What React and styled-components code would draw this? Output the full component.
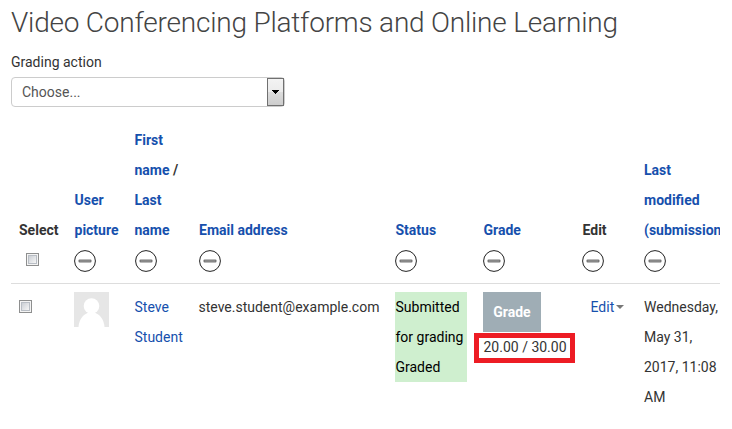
import React from 'react';
import styled, { createGlobalStyle } from 'styled-components';

const GlobalStyle = createGlobalStyle`
  * { box-sizing: border-box; }
  body {
    margin: 0;
    background: #fff;
    color: #333;
    font: 400 14px/30px Roboto, "Liberation Sans", sans-serif;
  }
`;

const Page = styled.main`
  width: 732px;
  height: 429px;
  padding: 0 12px 0 11px;
  overflow: hidden;
`;

const Title = styled.h1`
  margin: 0;
  padding-top: 3px;
  height: 47px;
  font-size: 28px;
  line-height: 40px;
  font-weight: 300;
  color: #444;
  white-space: nowrap;
  letter-spacing: -0.21px;
`;

const Label = styled.label`
  display: block;
  height: 30px;
`;

const Select = styled.div`
  display: flex;
  width: 274px;
  height: 30px;
  border: 1px solid #ccc;
  border-radius: 4px;
  line-height: 28px;
  color: #555;
`;

const SelectValue = styled.span`
  flex: 1;
  padding-left: 10px;
`;

const SelectButton = styled.span`
  display: flex;
  align-items: center;
  justify-content: center;
  width: 17px;
  height: 28px;
  border: 1px solid #707070;
  background: linear-gradient(#f3f3f3 0%, #ebebeb 50%, #dddddd 51%, #cdcdcd 100%);
`;

const Row = styled.div`
  display: grid;
  grid-template-columns: 55px 60.5px 64px 196.5px 88px 99px 62px 84px;
  width: 709px;
`;

const HeaderRow = styled(Row)`
  margin-top: 10px;
  height: 166px;
  align-items: end;
  font-weight: 700;
`;

const BodyRow = styled(Row)`
  border-top: 1px solid #ddd;
`;

const Cell = styled.div`
  min-width: 0;
  padding: 8px 0 8px 8px;
  white-space: nowrap;
`;

const ClippedCell = styled(Cell)`
  overflow: hidden;
`;

const EditCell = styled(Cell)`
  padding-left: 16.5px;
`;

const Link = styled.a`
  color: #1650ad;
`;

const TextLine = styled.div`
  padding-left: ${(p) => (p.$flush ? '0' : '0.5px')};
`;

const IconLine = styled.div`
  display: flex;
  align-items: center;
  height: 30px;
  padding-top: 2px;
`;

const CheckLine = styled(IconLine)`
  padding: 0 0 1px ${(p) => (p.$indent ? '7px' : '0')};
`;

const Check = styled.span`
  width: 13px;
  height: 13px;
  padding: 2px;
  border: 1px solid #8e8f8f;
  background: linear-gradient(135deg, #cbcfd5, #f6f6f6) content-box, #f4f4f4;
  box-shadow: inset 0 0 0 1px #f4f4f4, inset 0 0 0 2px #b9bec5;
`;

const Status = styled.div`
  width: 72px;
  padding-left: 0.5px;
  background: #cfefcf;
  color: #000;
`;

const GradeButton = styled.div`
  width: 58px;
  height: 40px;
  background: #9fadb5;
  color: #fff;
  font-weight: 700;
  line-height: 40px;
  text-align: center;
`;

const GradeValue = styled.div`
  position: relative;
  padding-left: 0.5px;
`;

const Highlight = styled.span`
  position: absolute;
  left: -9px;
  top: 1px;
  width: 101px;
  height: 30px;
  border: 5px solid #ed1c24;
`;

const Caret = styled.span`
  display: inline-block;
  margin-left: 2px;
  vertical-align: 3px;
  border: 4px solid transparent;
  border-top-color: #777;
  border-bottom: 0;
`;

const Picture = styled.svg`
  display: block;
`;

function HideIcon() {
  return (
    <svg width="22" height="22" viewBox="0 0 22 22" fill="none">
      <circle cx="11" cy="11" r="10.4" stroke="#222" strokeWidth="1" />
      <rect x="4.5" y="9.6" width="13" height="2.8" rx="1" fill="#777" />
      <path d="M6 11h10" stroke="#999" />
    </svg>
  );
}

const columns = [
  { lines: ['User', 'picture'] },
  { lines: ['First', 'name /', 'Last', 'name'], flush: true },
  { lines: ['Email address'] },
  { lines: ['Status'] },
  { lines: ['Grade'] },
  { lines: ['Edit'], plain: true },
  { lines: ['Last', 'modified', '(submission'], clipped: true, flush: true },
];

function HeaderLine({ text, plain, flush }) {
  if (plain) return <TextLine $flush={flush}>{text}</TextLine>;
  const [name, slash] = text.split(' /');
  return (
    <TextLine $flush={flush}>
      <Link>{name}</Link>{slash !== undefined && ' /'}
    </TextLine>
  );
}

export default function App() {
  return (
    <>
      <GlobalStyle />
      <Page>
        <Title>Video Conferencing Platforms and Online Learning</Title>
        <Label>Grading action</Label>
        <Select>
          <SelectValue>Choose...</SelectValue>
          <SelectButton>
            <svg width="7" height="4" viewBox="0 0 7 4" shapeRendering="crispEdges">
              <path d="M0 0h7v1H0zM1 1h5v1H1zM2 2h3v1H2zM3 3h1v1H3z" />
            </svg>
          </SelectButton>
        </Select>
        <HeaderRow>
          <Cell>
            <div>Select</div>
            <CheckLine $indent><Check /></CheckLine>
          </Cell>
          {columns.map((c) => {
            const Box = c.clipped ? ClippedCell : Cell;
            return (
              <Box key={c.lines.join(' ')}>
                {c.lines.map((l) => (
                  <HeaderLine key={l} text={l} plain={c.plain} flush={c.flush} />
                ))}
                <IconLine><HideIcon /></IconLine>
              </Box>
            );
          })}
        </HeaderRow>
        <BodyRow>
          <Cell><CheckLine><Check /></CheckLine></Cell>
          <Cell>
            <Picture width="35" height="35" viewBox="0 0 35 35">
              <path fill="#e6e6e6" d="M0 0h35v35H0z" />
              <circle cx="17.5" cy="14" r="7.8" fill="#fff" />
              <path fill="#fff" d="M4.500 35C5 28 8.500 23 13.500 21h8C26.500 23 30 28 30.500 35z" />
            </Picture>
          </Cell>
          <Cell><Link>Steve<br />Student</Link></Cell>
          <Cell>steve.student@example.com</Cell>
          <Cell><Status>Submitted<br />for grading<br />Graded</Status></Cell>
          <Cell>
            <GradeButton>Grade</GradeButton>
            <GradeValue>20.00 / 30.00<Highlight /></GradeValue>
          </Cell>
          <EditCell><Link>Edit</Link><Caret /></EditCell>
          <Cell>Wednesday,<br />May 31,<br />2017, 11:08<br />AM</Cell>
        </BodyRow>
      </Page>
    </>
  );
}
